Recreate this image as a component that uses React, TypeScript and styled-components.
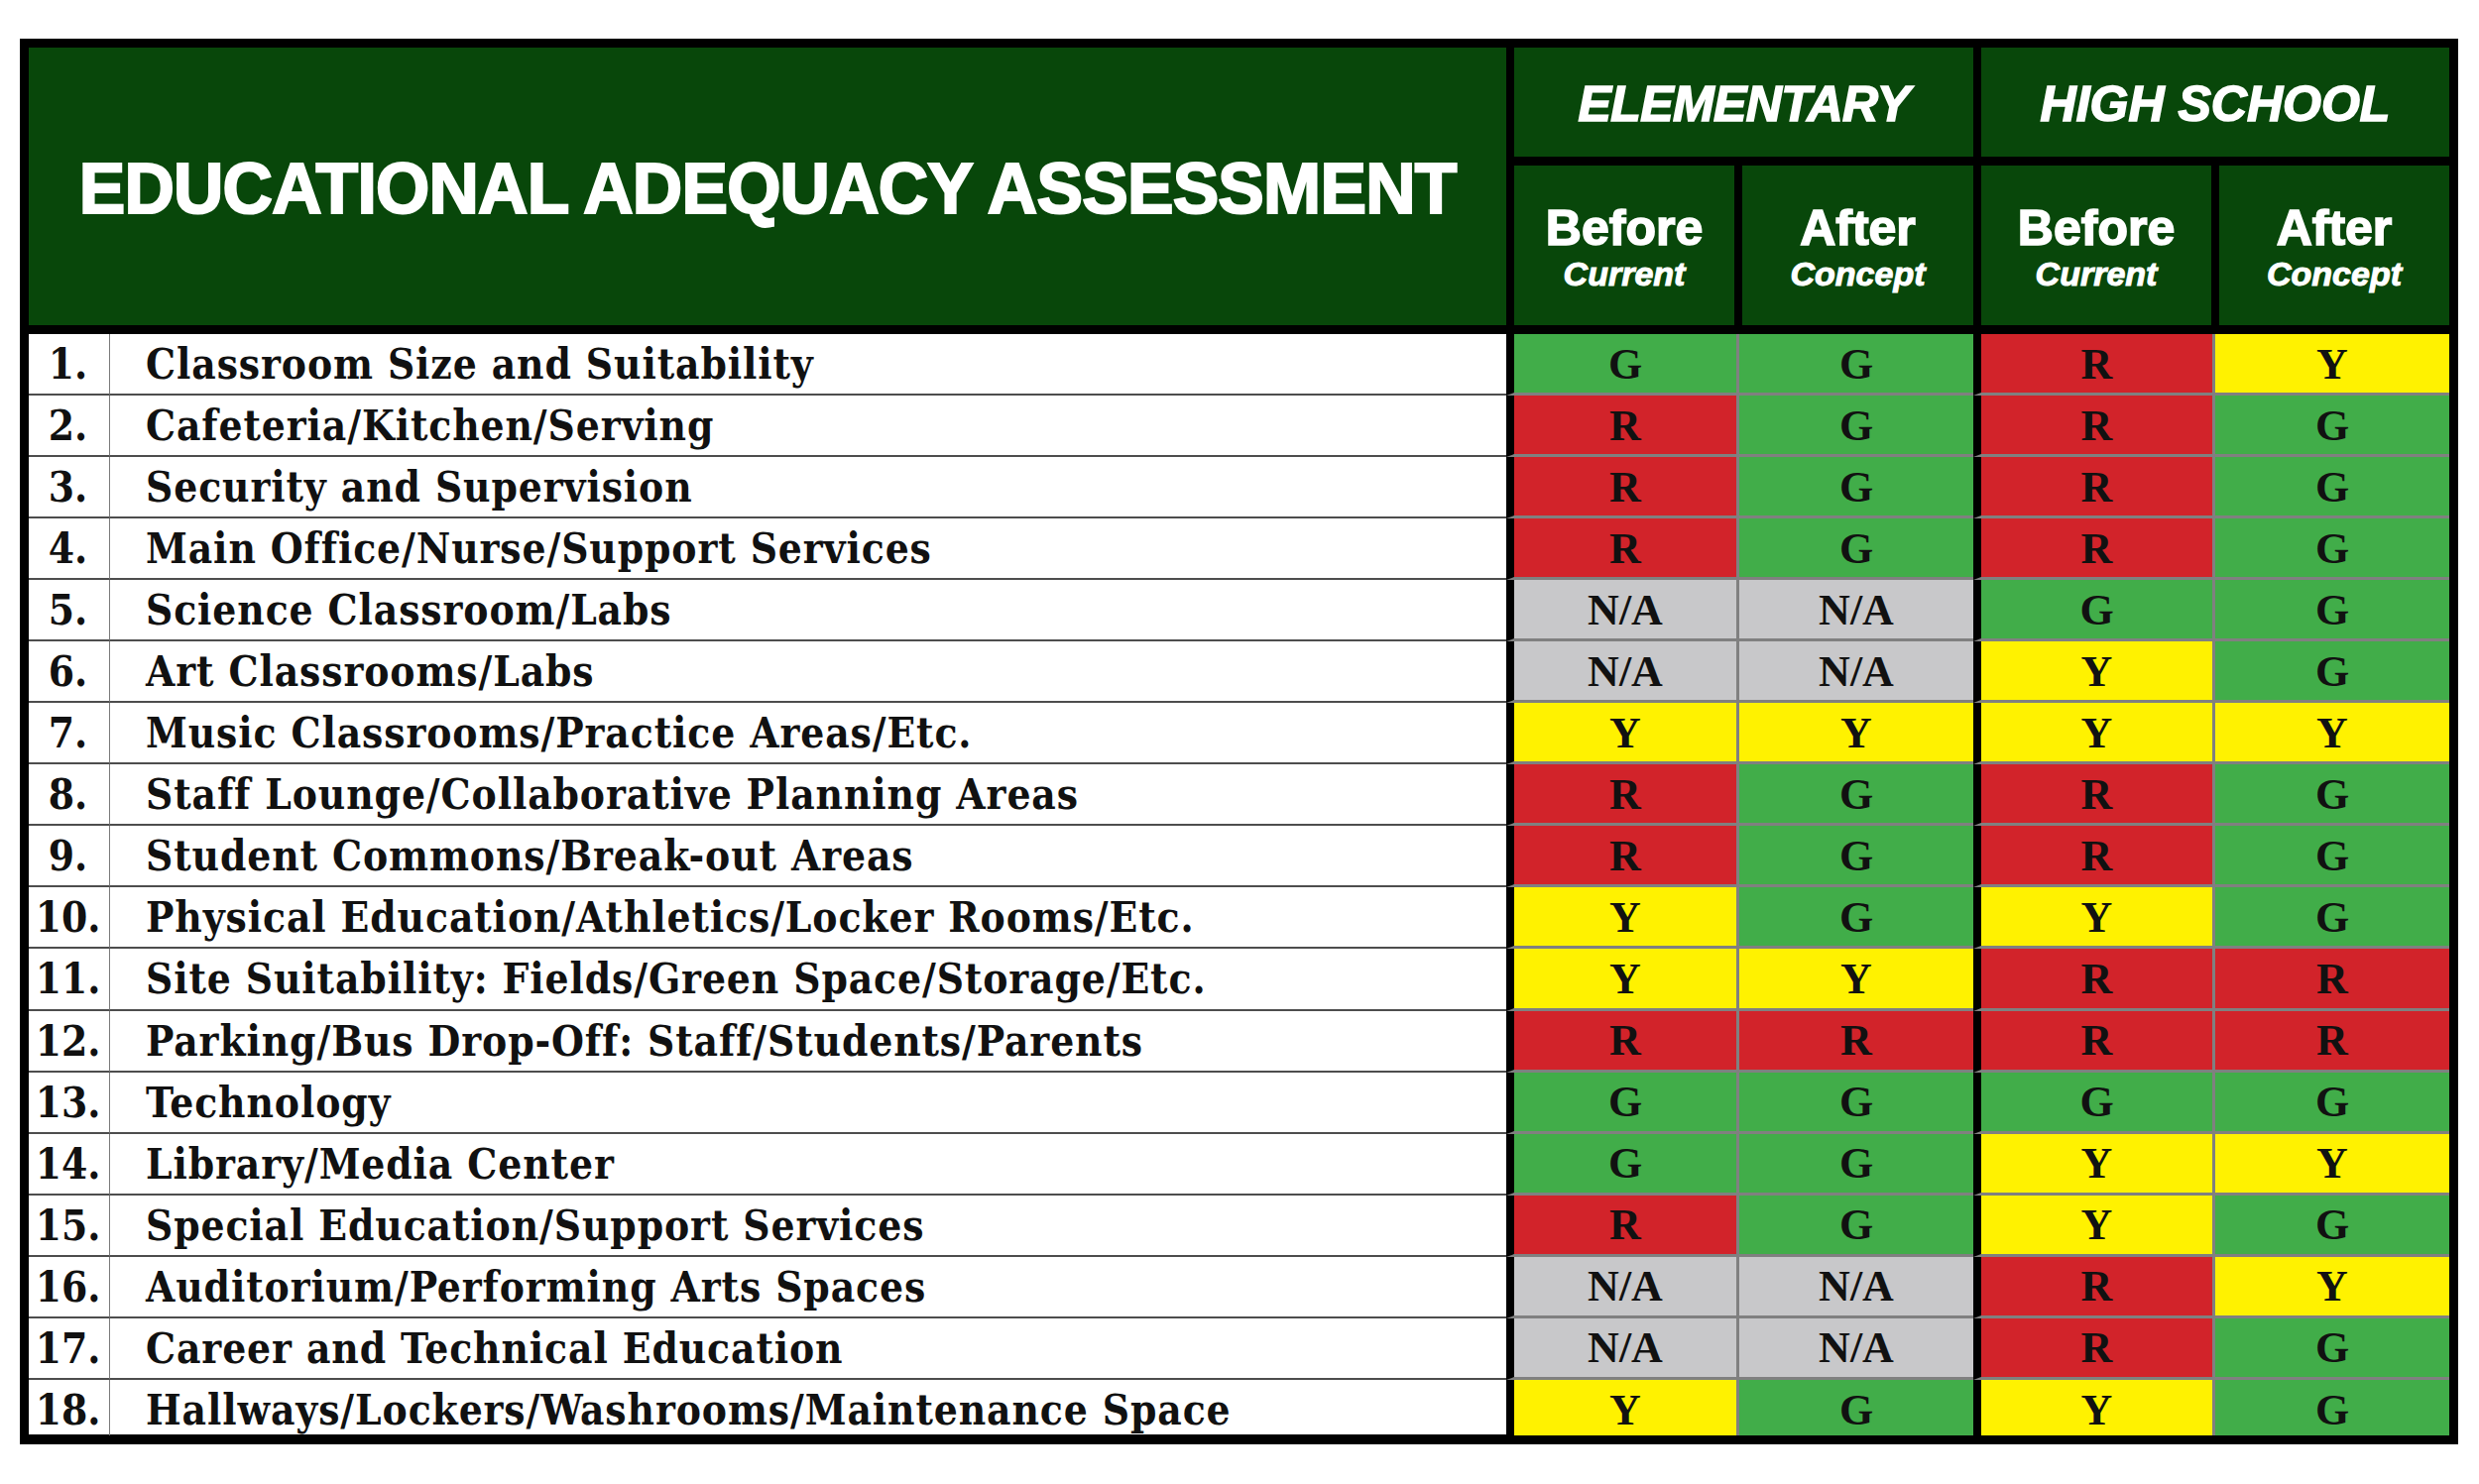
import React from 'react';
import styled, { createGlobalStyle } from 'styled-components';

const GlobalStyle = createGlobalStyle`
  html, body {
    margin: 0;
    padding: 0;
    background: #ffffff;
  }
  * {
    box-sizing: border-box;
  }
`;

const colors = {
  header: '#08470a',
  G: '#41ad49',
  R: '#d2232a',
  Y: '#fff200',
  NA: '#c8c8ca',
};

type Rating = 'G' | 'R' | 'Y' | 'N/A';

interface IRow {
  label: string;
  ratings: Rating[];
}

const rows: IRow[] = [
  { label: 'Classroom Size and Suitability', ratings: ['G', 'G', 'R', 'Y'] },
  { label: 'Cafeteria/Kitchen/Serving', ratings: ['R', 'G', 'R', 'G'] },
  { label: 'Security and Supervision', ratings: ['R', 'G', 'R', 'G'] },
  { label: 'Main Office/Nurse/Support Services', ratings: ['R', 'G', 'R', 'G'] },
  { label: 'Science Classroom/Labs', ratings: ['N/A', 'N/A', 'G', 'G'] },
  { label: 'Art Classrooms/Labs', ratings: ['N/A', 'N/A', 'Y', 'G'] },
  { label: 'Music Classrooms/Practice Areas/Etc.', ratings: ['Y', 'Y', 'Y', 'Y'] },
  { label: 'Staff Lounge/Collaborative Planning Areas', ratings: ['R', 'G', 'R', 'G'] },
  { label: 'Student Commons/Break-out Areas', ratings: ['R', 'G', 'R', 'G'] },
  { label: 'Physical Education/Athletics/Locker Rooms/Etc.', ratings: ['Y', 'G', 'Y', 'G'] },
  { label: 'Site Suitability: Fields/Green Space/Storage/Etc.', ratings: ['Y', 'Y', 'R', 'R'] },
  { label: 'Parking/Bus Drop-Off: Staff/Students/Parents', ratings: ['R', 'R', 'R', 'R'] },
  { label: 'Technology', ratings: ['G', 'G', 'G', 'G'] },
  { label: 'Library/Media Center', ratings: ['G', 'G', 'Y', 'Y'] },
  { label: 'Special Education/Support Services', ratings: ['R', 'G', 'Y', 'G'] },
  { label: 'Auditorium/Performing Arts Spaces', ratings: ['N/A', 'N/A', 'R', 'Y'] },
  { label: 'Career and Technical Education', ratings: ['N/A', 'N/A', 'R', 'G'] },
  { label: 'Hallways/Lockers/Washrooms/Maintenance Space', ratings: ['Y', 'G', 'Y', 'G'] },
];

const Frame = styled.div`
  width: 2459px;
  margin: 39px 0 0 20px;
  border: 9px solid #000;
  border-bottom-width: 10px;
  background: #fff;
`;

const Header = styled.div`
  display: grid;
  grid-template-columns: 1490px 222px 233px 232px 232px;
  grid-template-rows: 110px 161px;
  gap: 9px 8px;
  background: #000;
  border-bottom: 9px solid #000;
  color: #fff;
  font-family: 'Liberation Sans', Arial, sans-serif;
  font-weight: 700;
`;

const HeadCell = styled.div`
  background: ${colors.header};
  display: flex;
  align-items: center;
  justify-content: center;
`;

const TitleCell = styled(HeadCell)`
  grid-row: 1 / span 2;
  font-size: 73px;
  letter-spacing: -0.8px;
  -webkit-text-stroke: 2.2px #fff;
  padding-top: 2px;

  span {
    display: inline-block;
    transform: scaleX(0.955);
  }
`;

const GroupCell = styled(HeadCell)<{ $spacing: number }>`
  grid-column: span 2;
  font-size: 50px;
  font-style: italic;
  letter-spacing: ${(p) => p.$spacing}px;
  -webkit-text-stroke: 1.6px #fff;
  padding-top: 3px;
`;

const PhaseCell = styled(HeadCell)`
  flex-direction: column;
`;

const Phase = styled.span`
  font-size: 50px;
  line-height: 56px;
  -webkit-text-stroke: 1.6px #fff;
`;

const PhaseNote = styled.span`
  font-size: 34px;
  line-height: 36px;
  font-style: italic;
  -webkit-text-stroke: 1px #fff;
`;

const Body = styled.div`
  display: flex;
  flex-direction: column;
`;

const Row = styled.div<{ $last: boolean }>`
  display: grid;
  grid-template-columns: 82px 1408px 232px 239px 241px 239px;
  height: ${(p) => (p.$last ? '55px' : '62.06px')};
`;

const TextCell = styled.div<{ $last: boolean }>`
  display: flex;
  align-items: center;
  font-family: 'DejaVu Serif', 'Liberation Serif', serif;
  font-stretch: condensed;
  font-weight: 700;
  font-size: 42px;
  color: #111;
  border-bottom: ${(p) => (p.$last ? 'none' : '2px solid #4d4d4d')};
  padding-top: ${(p) => (p.$last ? '5px' : '1px')};
`;

const NumCell = styled(TextCell)`
  justify-content: center;
  border-right: 1px solid #7a7a7a;
  padding-right: 2px;
`;

const LabelCell = styled(TextCell)`
  padding-left: 36px;
  letter-spacing: 0.9px;
  white-space: nowrap;
`;

const Mark = styled.div<{ $rating: Rating; $lead: 'black' | 'grey'; $last: boolean }>`
  display: flex;
  align-items: center;
  justify-content: center;
  background: ${(p) => (p.$rating === 'N/A' ? colors.NA : colors[p.$rating])};
  border-left: ${(p) => (p.$lead === 'black' ? '8px solid #000' : '3px solid #808080')};
  border-bottom: ${(p) => (p.$last ? 'none' : '3px solid #808080')};
  font-family: 'Liberation Serif', 'Times New Roman', serif;
  font-weight: 700;
  font-size: 44px;
  color: #111;
  padding-top: ${(p) => (p.$last ? '5px' : '1px')};
`;

const leads: ('black' | 'grey')[] = ['black', 'grey', 'black', 'grey'];

const App = () => {
  return (
    <>
      <GlobalStyle />
      <Frame>
        <Header>
          <TitleCell>
            <span>EDUCATIONAL ADEQUACY ASSESSMENT</span>
          </TitleCell>
          <GroupCell $spacing={-0.6}>ELEMENTARY</GroupCell>
          <GroupCell $spacing={0}>HIGH SCHOOL</GroupCell>
          <PhaseCell>
            <Phase>Before</Phase>
            <PhaseNote>Current</PhaseNote>
          </PhaseCell>
          <PhaseCell>
            <Phase>After</Phase>
            <PhaseNote>Concept</PhaseNote>
          </PhaseCell>
          <PhaseCell>
            <Phase>Before</Phase>
            <PhaseNote>Current</PhaseNote>
          </PhaseCell>
          <PhaseCell>
            <Phase>After</Phase>
            <PhaseNote>Concept</PhaseNote>
          </PhaseCell>
        </Header>
        <Body>
          {rows.map((row, i) => {
            const last = i === rows.length - 1;
            return (
              <Row key={row.label} $last={last}>
                <NumCell $last={last}>{i + 1}.</NumCell>
                <LabelCell $last={last}>{row.label}</LabelCell>
                {row.ratings.map((r, j) => (
                  <Mark key={j} $rating={r} $lead={leads[j]} $last={last}>
                    {r}
                  </Mark>
                ))}
              </Row>
            );
          })}
        </Body>
      </Frame>
    </>
  );
};

export default App;
